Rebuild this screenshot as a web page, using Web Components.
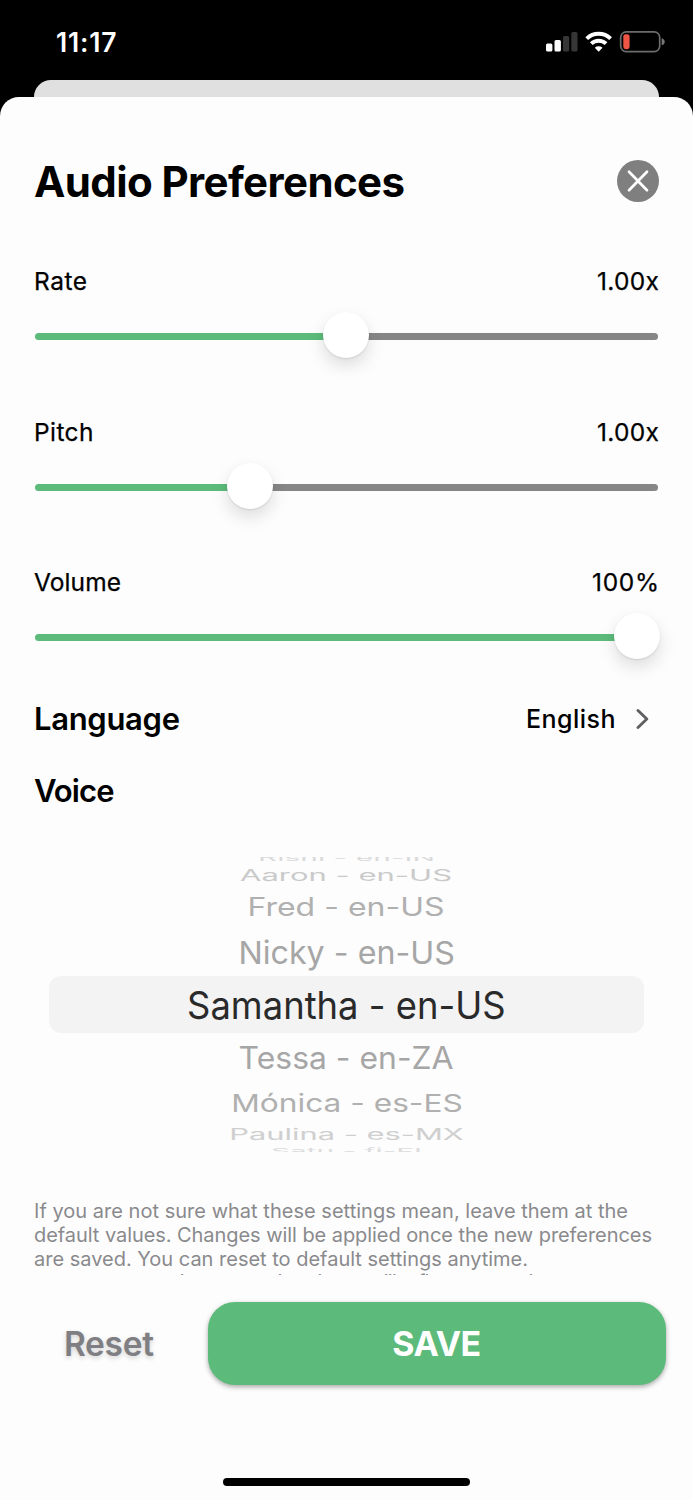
<!DOCTYPE html>
<html lang="en">
<head>
<meta charset="utf-8">
<title>Audio Preferences</title>
<style>
html,body{margin:0;padding:0;background:#000}
body{width:693px;height:1500px;overflow:hidden;font-family:Inter,"Liberation Sans",sans-serif}
</style>
</head>
<body>
<audio-screen></audio-screen>
<script>
const define=(name,html,setup)=>customElements.define(name,class extends HTMLElement{
  constructor(){super();const t=document.createElement('template');t.innerHTML=html;
    this.attachShadow({mode:'open'}).append(t.content.cloneNode(true));}
  connectedCallback(){if(setup)setup(this,this.shadowRoot);}
});

/* One line of text whose tracking is adjusted to a given width. */
define('tracked-text',`<style>
:host{display:block;white-space:pre;line-height:1}
span{display:inline-block}
</style><span><slot></slot></span>`,(el,root)=>{
  const s=root.querySelector('span'),n=el.textContent.length;
  const w=s.getBoundingClientRect().width;
  const ls=(+el.getAttribute('w')-w)/(n-1);
  s.style.letterSpacing=ls+'px';s.style.marginRight=-ls+'px';
});

define('status-bar',`<style>
:host{display:flex;justify-content:space-between;align-items:flex-start;height:80px;box-sizing:border-box;padding:28px 28px 0 56px;color:#fff;background:#000}
tracked-text{font-size:26.5px;font-weight:600;line-height:28px}
svg{display:block}
</style><tracked-text w="60.500">11:17</tracked-text>
<svg width="120" height="28" viewBox="545 28 120 28">
<rect x="546" y="43.500" width="6.400" height="8" rx="1.600" fill="#fff"/><rect x="554.500" y="40" width="6.400" height="11.500" rx="1.600" fill="#fff"/>
<rect x="563" y="36" width="6.200" height="15.500" rx="1.600" fill="#363636"/><rect x="571.300" y="32" width="6.200" height="19.500" rx="1.600" fill="#363636"/>
<g fill="none" stroke="#fff" stroke-width="3.900"><path d="M586.700 38.700a17 17 0 0 1 23.900 0"/><path d="M591.300 43.700a10.500 10.500 0 0 1 14.700 0"/></g>
<path d="M594.800 47.700a5.700 5.700 0 0 1 7.700 0L598.650 51.700z" fill="#fff"/>
<rect x="620.700" y="31.900" width="39" height="19.700" rx="5.500" fill="none" stroke="#6c6c6c" stroke-width="1.700"/>
<path d="M661.700 38.300q3 1 3 3.500t-3 3.500z" fill="#777"/><rect x="623.300" y="34.200" width="6.300" height="15" rx="2.400" fill="#ee5545"/>
</svg>`);

define('sheet-header',`<style>
:host{display:flex;justify-content:space-between;align-items:center;height:42px}
tracked-text{font-size:42px;font-weight:700;padding-top:2px}
svg{display:block}
</style><tracked-text w="371">Audio Preferences</tracked-text>
<svg width="42" height="42" viewBox="0 0 42 42"><circle cx="21" cy="21" r="21" fill="#7f7f7f"/><path d="M12 11.800 30 30.200M30 11.800 12 30.200" stroke="#fff" stroke-width="2.700" stroke-linecap="round"/></svg>`);

define('audio-slider',`<style>
:host{display:block;height:150.500px}
.row{display:flex;justify-content:space-between;height:28px;font-size:24.500px;-webkit-text-stroke:.25px #000}
tracked-text{line-height:28px}
.track{position:relative;height:7px;margin:38px 1.500px 0 1px;border-radius:4px;background:linear-gradient(90deg,#5cbb7a var(--p),#868686 var(--p))}
.thumb{position:absolute;left:var(--p);top:-21px;width:46px;height:46px;margin-left:-23px;border-radius:50%;background:#fff;box-shadow:0 1px 2px rgba(0,0,0,.1),0 8px 17px rgba(0,0,0,.13)}
</style><div class="row"><tracked-text id="l"></tracked-text><tracked-text id="v"></tracked-text></div><div class="track"><div class="thumb"></div></div>`,(el,root)=>{
  for(const [id,t,w] of [['l','label','lw'],['v','value','vw']]){
    const old=root.getElementById(id),n=document.createElement('tracked-text');
    n.textContent=el.getAttribute(t);n.setAttribute('w',el.getAttribute(w));old.replaceWith(n);
  }
  root.querySelector('.track').style.setProperty('--p',el.getAttribute('pos'));
});

define('language-row',`<style>
:host{display:flex;justify-content:space-between;height:36px}
tracked-text{line-height:36px}
.l{font-size:31px;font-weight:600}
.r{display:flex;align-items:center;gap:20px;padding-right:10.500px;font-size:25px;font-weight:500}
svg{display:block}
</style><tracked-text class="l" w="146">Language</tracked-text><div class="r"><tracked-text w="89.500">English</tracked-text>
<svg width="13" height="22" viewBox="0 0 13 22"><path d="M2 2.500 10.800 11 2 19.500" fill="none" stroke="#606063" stroke-width="2.900" stroke-linecap="round" stroke-linejoin="round"/></svg></div>`);

/* A wheel row: text is foreshortened vertically to cap height "cap" and set to width "w". */
define('wheel-item',`<style>
:host{position:absolute;left:0;right:0;height:0;display:flex;justify-content:center}
span{display:block;flex:none;white-space:pre;font-size:38px;line-height:50px;height:50px;transform-origin:50% 38.820px;margin-top:-38.820px}
</style><span><slot></slot></span>`,(el,root)=>{
  const s=root.querySelector('span'),w=s.getBoundingClientRect().width;
  el.style.top=el.getAttribute('base')+'px';el.style.color=el.getAttribute('tone');
  s.style.transform='scale('+el.getAttribute('w')/w+','+el.getAttribute('cap')/27.640+')';
});

define('voice-wheel',`<style>
:host{display:block;position:relative;height:294.500px;overflow:hidden}
.sel{position:absolute;left:15px;right:15px;top:119px;height:57px;border-radius:12px;background:#f3f3f4}
</style><div class="sel"></div>
<wheel-item base="3.600" w="177" cap="6.500" tone="#dadada">Rishi - en-IN</wheel-item>
<wheel-item base="23.400" w="212" cap="11.600" tone="#cacaca">Aaron - en-US</wheel-item>
<wheel-item base="59.300" w="197" cap="18.300" tone="#b0b0b0">Fred - en-US</wheel-item>
<wheel-item base="106.700" w="216.500" cap="23" tone="#a6a6a6">Nicky - en-US</wheel-item>
<wheel-item base="162" w="318.500" cap="27.900" tone="#2a2a2a">Samantha - en-US</wheel-item>
<wheel-item base="211.600" w="215" cap="22.700" tone="#a6a6a6">Tessa - en-ZA</wheel-item>
<wheel-item base="254.500" w="231.500" cap="18" tone="#b0b0b0">Mónica - es-ES</wheel-item>
<wheel-item base="283" w="234.500" cap="11.500" tone="#cfcfcf">Paulina - es-MX</wheel-item>
<wheel-item base="297" w="151" cap="5.800" tone="#dcdcdc">Satu - fi-FI</wheel-item>`);

define('help-text',`<style>
:host{display:block;height:76.500px;overflow:hidden;font-size:20px;color:#8a8a8d}
tracked-text{line-height:24px}
tracked-text:last-of-type{margin-top:-.500px}
</style><tracked-text w="594">If you are not sure what these settings mean, leave them at the</tracked-text>
<tracked-text w="618">default values. Changes will be applied once the new preferences</tracked-text>
<tracked-text w="494">are saved. You can reset to default settings anytime.</tracked-text>
<tracked-text w="550">as soon as you close a new head, you will reflect a new change</tracked-text>`);

define('action-bar',`<style>
:host{display:flex;height:83px;margin:0 -7px 0 0}
.reset{width:173.500px;display:flex;align-items:center;padding:2px 0 0 30px;box-sizing:border-box;color:#7f7f83;font-size:33.500px;font-weight:600;text-shadow:0 2px 5px rgba(0,0,0,.18)}
.save{flex:1;display:flex;align-items:center;justify-content:center;border-radius:27px;background:#5cbb7a;color:#fff;font-size:34px;font-weight:700;box-shadow:0 2px 5px rgba(0,0,0,.34)}
</style><div class="reset"><tracked-text w="90">Reset</tracked-text></div><div class="save"><tracked-text w="89">SAVE</tracked-text></div>`);

define('audio-screen',`<style>
:host{display:block;width:693px;height:1500px;overflow:hidden;background:#000}
.back{height:17px;margin:0 34px;border-radius:17px 17px 0 0;background:#e0e0e0}
main{display:flex;flex-direction:column;box-sizing:border-box;height:1403px;padding:63px 34px 0;border-radius:19px 19px 0 0;background:#fdfdfd}
.sliders{margin-top:65px}
language-row{margin-top:-17.500px}
.voice{margin-top:36px;font-size:31px;font-weight:600;line-height:36px}
voice-wheel{margin-top:48px}
help-text{margin-top:47px}
action-bar{margin-top:27px}
.home{width:247px;height:8px;border-radius:4px;background:#000;margin:93px auto 0}
</style><status-bar></status-bar><div class="back"></div>
<main><sheet-header></sheet-header>
<div class="sliders"><audio-slider label="Rate" lw="53" value="1.00x" vw="62" pos="50%"></audio-slider><audio-slider label="Pitch" lw="59.500" value="1.00x" vw="62" pos="34.600%"></audio-slider><audio-slider label="Volume" lw="87" value="100%" vw="67" pos="96.700%"></audio-slider></div>
<language-row></language-row><tracked-text class="voice" w="80.500">Voice</tracked-text>
<voice-wheel></voice-wheel><help-text></help-text><action-bar></action-bar><div class="home"></div></main>`);
</script>
</body>
</html>
